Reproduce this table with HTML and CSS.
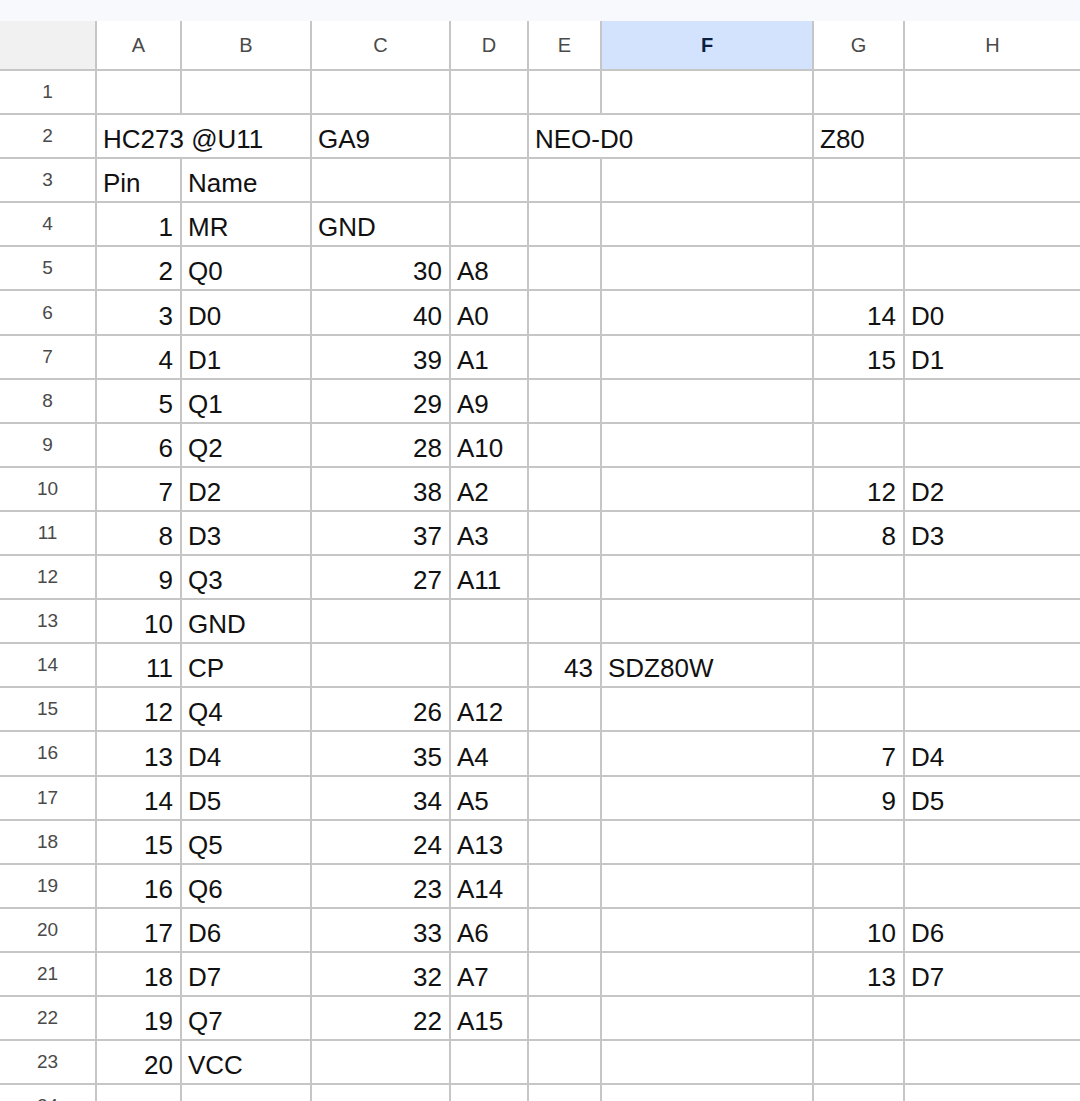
FILE: index.html
```html
<!DOCTYPE html>
<html>
<head>
<meta charset="utf-8">
<link rel="stylesheet" href="styles.css">
</head>
<body>
<div class="strip"></div>
<div class="sheet">
  <div class="corner"></div><div class="ch">A</div><div class="ch">B</div><div class="ch">C</div><div class="ch">D</div><div class="ch">E</div><div class="ch sel">F</div><div class="ch">G</div><div class="ch">H</div>

  <div class="rh">1</div><div class="c"></div><div class="c"></div><div class="c"></div><div class="c"></div><div class="c"></div><div class="c"></div><div class="c"></div><div class="c"></div>

  <div class="rh">2</div><div class="c span2">HC273 @U11</div><div class="c">GA9</div><div class="c"></div><div class="c span2">NEO-D0</div><div class="c">Z80</div><div class="c"></div>

  <div class="rh">3</div><div class="c">Pin</div><div class="c">Name</div><div class="c"></div><div class="c"></div><div class="c"></div><div class="c"></div><div class="c"></div><div class="c"></div>

  <div class="rh">4</div><div class="c n">1</div><div class="c">MR</div><div class="c">GND</div><div class="c"></div><div class="c"></div><div class="c"></div><div class="c"></div><div class="c"></div>

  <div class="rh">5</div><div class="c n">2</div><div class="c">Q0</div><div class="c n">30</div><div class="c">A8</div><div class="c"></div><div class="c"></div><div class="c"></div><div class="c"></div>

  <div class="rh">6</div><div class="c n">3</div><div class="c">D0</div><div class="c n">40</div><div class="c">A0</div><div class="c"></div><div class="c"></div><div class="c n">14</div><div class="c">D0</div>

  <div class="rh">7</div><div class="c n">4</div><div class="c">D1</div><div class="c n">39</div><div class="c">A1</div><div class="c"></div><div class="c"></div><div class="c n">15</div><div class="c">D1</div>

  <div class="rh">8</div><div class="c n">5</div><div class="c">Q1</div><div class="c n">29</div><div class="c">A9</div><div class="c"></div><div class="c"></div><div class="c"></div><div class="c"></div>

  <div class="rh">9</div><div class="c n">6</div><div class="c">Q2</div><div class="c n">28</div><div class="c">A10</div><div class="c"></div><div class="c"></div><div class="c"></div><div class="c"></div>

  <div class="rh">10</div><div class="c n">7</div><div class="c">D2</div><div class="c n">38</div><div class="c">A2</div><div class="c"></div><div class="c"></div><div class="c n">12</div><div class="c">D2</div>

  <div class="rh">11</div><div class="c n">8</div><div class="c">D3</div><div class="c n">37</div><div class="c">A3</div><div class="c"></div><div class="c"></div><div class="c n">8</div><div class="c">D3</div>

  <div class="rh">12</div><div class="c n">9</div><div class="c">Q3</div><div class="c n">27</div><div class="c">A11</div><div class="c"></div><div class="c"></div><div class="c"></div><div class="c"></div>

  <div class="rh">13</div><div class="c n">10</div><div class="c">GND</div><div class="c"></div><div class="c"></div><div class="c"></div><div class="c"></div><div class="c"></div><div class="c"></div>

  <div class="rh">14</div><div class="c n">11</div><div class="c">CP</div><div class="c"></div><div class="c"></div><div class="c n">43</div><div class="c">SDZ80W</div><div class="c"></div><div class="c"></div>

  <div class="rh">15</div><div class="c n">12</div><div class="c">Q4</div><div class="c n">26</div><div class="c">A12</div><div class="c"></div><div class="c"></div><div class="c"></div><div class="c"></div>

  <div class="rh">16</div><div class="c n">13</div><div class="c">D4</div><div class="c n">35</div><div class="c">A4</div><div class="c"></div><div class="c"></div><div class="c n">7</div><div class="c">D4</div>

  <div class="rh">17</div><div class="c n">14</div><div class="c">D5</div><div class="c n">34</div><div class="c">A5</div><div class="c"></div><div class="c"></div><div class="c n">9</div><div class="c">D5</div>

  <div class="rh">18</div><div class="c n">15</div><div class="c">Q5</div><div class="c n">24</div><div class="c">A13</div><div class="c"></div><div class="c"></div><div class="c"></div><div class="c"></div>

  <div class="rh">19</div><div class="c n">16</div><div class="c">Q6</div><div class="c n">23</div><div class="c">A14</div><div class="c"></div><div class="c"></div><div class="c"></div><div class="c"></div>

  <div class="rh">20</div><div class="c n">17</div><div class="c">D6</div><div class="c n">33</div><div class="c">A6</div><div class="c"></div><div class="c"></div><div class="c n">10</div><div class="c">D6</div>

  <div class="rh">21</div><div class="c n">18</div><div class="c">D7</div><div class="c n">32</div><div class="c">A7</div><div class="c"></div><div class="c"></div><div class="c n">13</div><div class="c">D7</div>

  <div class="rh">22</div><div class="c n">19</div><div class="c">Q7</div><div class="c n">22</div><div class="c">A15</div><div class="c"></div><div class="c"></div><div class="c"></div><div class="c"></div>

  <div class="rh">23</div><div class="c n">20</div><div class="c">VCC</div><div class="c"></div><div class="c"></div><div class="c"></div><div class="c"></div><div class="c"></div><div class="c"></div>

  <div class="rh">24</div><div class="c"></div><div class="c"></div><div class="c"></div><div class="c"></div><div class="c"></div><div class="c"></div><div class="c"></div><div class="c"></div>
</div>
</body>
</html>
```

FILE: styles.css
```css
html, body {
  margin: 0;
  padding: 0;
  background: #ffffff;
}
body {
  width: 1080px;
  height: 1101px;
  overflow: hidden;
}
.strip {
  height: 21px;
  background: #f8f9fd;
}
.sheet {
  display: grid;
  grid-template-columns: 95px 83px 128px 137px 76px 71px 210px 89px 1fr;
  grid-template-rows: 48px;
  grid-auto-rows: 42.1px;
  gap: 2px;
  background: #c6c6c6;
}
.corner {
  background: #f1f1f1;
}
.ch {
  background: #ffffff;
  display: flex;
  align-items: center;
  justify-content: center;
  font-family: "Liberation Sans", Arial, sans-serif;
  font-size: 20px;
  color: #4a4a4a;
}
.ch.sel {
  background: #d3e3fd;
  color: #0b1f40;
  font-weight: 700;
}
.rh {
  background: #ffffff;
  display: flex;
  align-items: center;
  justify-content: center;
  font-family: "Liberation Sans", Arial, sans-serif;
  font-size: 19px;
  color: #4a4a4a;
}
.c {
  background: #ffffff;
  display: flex;
  align-items: flex-end;
  justify-content: flex-start;
  padding: 0 7px 3px 6px;
  font-family: "Liberation Sans", Arial, sans-serif;
  font-size: 26px;
  line-height: 30px;
  color: #111111;
  white-space: nowrap;
  overflow: visible;
  min-width: 0;
}
.c.n {
  justify-content: flex-end;
}
.span2 {
  grid-column: span 2;
}
```
